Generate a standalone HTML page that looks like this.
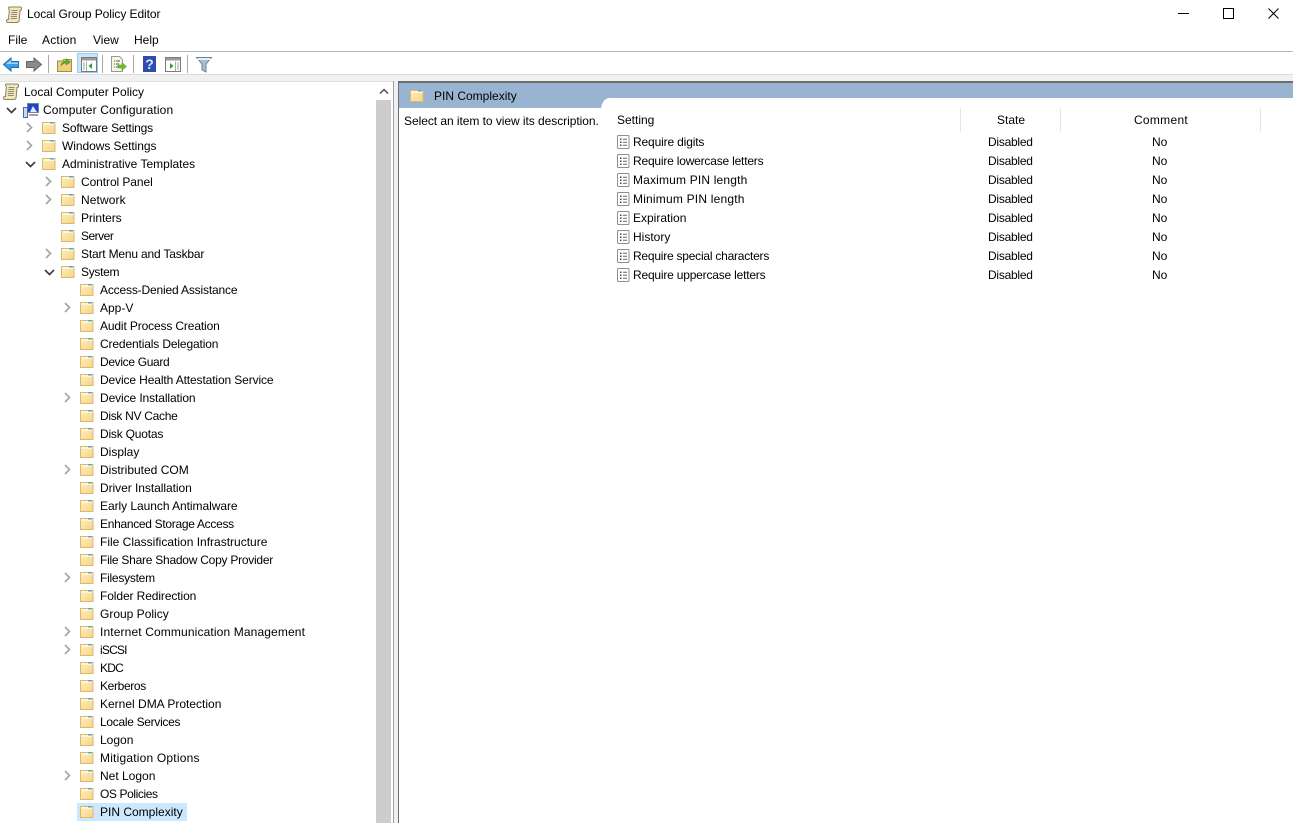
<!DOCTYPE html>
<html><head><meta charset="utf-8"><style>
html,body{margin:0;padding:0;background:#fff}
body{width:1293px;height:823px;position:relative;overflow:hidden;font-family:"Liberation Sans",sans-serif;font-size:12px;color:#000}
.a{position:absolute}
.t{position:absolute;white-space:nowrap;line-height:18px;height:18px}
svg.i{position:absolute;overflow:visible}
</style></head><body>
<svg width="0" height="0" style="position:absolute"><defs>
<linearGradient id="g" x1="0" y1="0" x2="1" y2="1"><stop offset="0" stop-color="#fdeebf"/><stop offset="1" stop-color="#f6d587"/></linearGradient>
<symbol id="f" viewBox="0 0 15 13"><path d="M1.500 12.500V1.500h12.500v11z" fill="url(#g)" stroke="#dcb86f"/><path d="M2 2h11.500v2H2z" fill="#fff6d8"/><rect x="9" y="1" width="4" height="1.500" fill="#5aa6dc"/></symbol>
<symbol id="d" viewBox="0 0 13 14"><rect x=".5" y=".5" width="11.500" height="13" rx="1" fill="#fff" stroke="#8f8f8f"/><path d="M3 3.500h1.500V5H3zM3 6.500h1.500V8H3zM3 9.500h1.500V11H3z" fill="#444"/><path d="M6 4.200h4M6 7.200h4M6 10.200h4" stroke="#666"/></symbol>
<symbol id="r" viewBox="0 0 7 11"><path d="M1 1l4.500 4.500L1 10" fill="none" stroke="#a6a6a6" stroke-width="1.700"/></symbol>
<symbol id="o" viewBox="0 0 11 7"><path d="M1 1l4.500 4.500L10 1" fill="none" stroke="#404040" stroke-width="1.700"/></symbol>
<symbol id="s" viewBox="0 0 16 17"><path d="M3.500 1h10.500c1.200 0 1.500 1 1.500 2 0 1-.5 1.500-1.500 1.500l-.8 9.500c-.1 1.500-1 2.500-2.200 2.500H2c-1 0-1.500-.7-1.500-1.500S1 13.500 2 13.500h.5L3.300 4C3.300 3 2.500 2.700 2.500 2S3 1 3.500 1z" fill="#f4e6bb" stroke="#8d8261"/><path d="M5.500 4.500h6M5.300 6.500h6M5.100 8.500h6M5 10.500h6M4.800 12.500h6" stroke="#8a8a80"/></symbol>
</defs></svg>

<!-- title bar -->
<svg class="i" style="left:6px;top:6px" width="16" height="17"><use href="#s"/></svg>
<div class="t" style="left:27px;top:5px;letter-spacing:-.08px">Local Group Policy Editor</div>
<div class="a" style="left:1178px;top:13px;width:11px;height:1px;background:#000"></div>
<div class="a" style="left:1223px;top:8px;width:9px;height:9px;border:1px solid #000"></div>
<svg class="i" style="left:1268px;top:8px" width="11" height="11"><path d="M.5.500l10 10M10.500.500l-10 10" stroke="#000" fill="none"/></svg>

<!-- menu -->
<div class="t" style="left:8px;top:31px">File</div>
<div class="t" style="left:42px;top:31px;letter-spacing:.2px">Action</div>
<div class="t" style="left:93px;top:31px">View</div>
<div class="t" style="left:134px;top:31px">Help</div>
<div class="a" style="left:0;top:51px;width:1293px;height:1px;background:#b4b7c0"></div>

<!-- toolbar -->
<svg class="i" style="left:3px;top:57px" width="16" height="15"><path d="M.5 7.500L8 1v3.500h7.500v6H8V14z" fill="#3a9ee8" stroke="#1c6fb5"/><path d="M3 7l5-4v2.500h7V7z" fill="#9bd4f7"/></svg>
<svg class="i" style="left:26px;top:57px" width="16" height="15"><path d="M15.500 7.500L8 1v3.500H.5v6H8V14z" fill="#8b8b8b" stroke="#666"/></svg>
<div class="a" style="left:48px;top:55px;width:1px;height:18px;background:#a8a8a8"></div>
<svg class="i" style="left:57px;top:56px" width="16" height="16"><path d="M.5 15.500V5h5l1-1.500h8v12z" fill="#f0cf7c" stroke="#a98b45"/><path d="M4 10c0-3 2-5 5-5V2.500L13.500 6 9 9V7C7 7 5.500 8 4 10z" fill="#55b029" stroke="#3d8a1c" stroke-width=".5"/></svg>
<div class="a" style="left:77px;top:53px;width:21px;height:20px;background:#cce4f7;border:1px solid #9ccbef;box-sizing:border-box"></div>
<svg class="i" style="left:81px;top:57px" width="16" height="15"><rect x=".5" y=".5" width="15" height="14" fill="#fff" stroke="#7a7a7a"/><rect x="1" y="1" width="14" height="2.500" fill="#9a9a9a"/><path d="M5.500 4.500v9.500" stroke="#aaa"/><path d="M2 6h2M2 8h2M2 10h2M2 12h2" stroke="#8aa9c8"/><path d="M11 6v6L7.500 9z" fill="#2ba32b"/></svg>
<div class="a" style="left:102px;top:55px;width:1px;height:18px;background:#a8a8a8"></div>
<svg class="i" style="left:111px;top:56px" width="16" height="16"><path d="M.5.500h8l3 3V15.500H.5z" fill="#fbf6e3" stroke="#999"/><path d="M3 5h1M5 5h4M3 8h1M5 8h3M3 11h1M5 11h3" stroke="#555"/><path d="M7 9h4V6.500L15.500 10.500 11 14.500V12H7z" fill="#69bf3b" stroke="#4c9a27" stroke-width=".5"/></svg>
<div class="a" style="left:133px;top:55px;width:1px;height:18px;background:#a8a8a8"></div>
<div class="a" style="left:143px;top:56px;width:13px;height:16px;background:#2f4db0;color:#dfe6fa;font:bold 14px/16px 'Liberation Sans',sans-serif;text-align:center">?</div>
<svg class="i" style="left:165px;top:57px" width="16" height="15"><rect x=".5" y=".5" width="15" height="14" fill="#fff" stroke="#7a7a7a"/><rect x="1" y="1" width="14" height="2.500" fill="#9a9a9a"/><path d="M10.500 4.500v9.500" stroke="#aaa"/><path d="M12 6h2M12 8h2M12 10h2M12 12h2" stroke="#8aa9c8"/><path d="M5 6v6L8.500 9z" fill="#2ba32b"/></svg>
<div class="a" style="left:187px;top:55px;width:1px;height:18px;background:#a8a8a8"></div>
<svg class="i" style="left:196px;top:57px" width="17" height="16"><path d="M.5.500h15L10 7v8l-4-2V7z" fill="#a9bccb" stroke="#6e8596"/><path d="M1.500 1h13v2h-13z" fill="#e3edf3"/></svg>

<!-- splitter band -->
<div class="a" style="left:0;top:74px;width:1293px;height:1px;background:#dcdcdc"></div>
<div class="a" style="left:0;top:75px;width:1293px;height:6px;background:#f0f0f0"></div>
<div class="a" style="left:0;top:81px;width:394px;height:1px;background:#e0e0e0"></div>
<div class="a" style="left:393px;top:81px;width:1px;height:742px;background:#a0a0a0"></div>
<div class="a" style="left:394px;top:81px;width:4px;height:742px;background:#f0f0f0"></div>
<div class="a" style="left:398px;top:81px;width:895px;height:2px;background:#6e6e6e"></div>
<div class="a" style="left:398px;top:81px;width:1px;height:742px;background:#6e6e6e"></div>

<!-- scrollbar -->
<div class="a" style="left:376px;top:100px;width:15px;height:723px;background:#cdcdcd"></div>
<svg class="i" style="left:379px;top:88px" width="10" height="7"><path d="M1 5.500l4-4 4 4" fill="none" stroke="#505050" stroke-width="1.500"/></svg>

<!-- tree -->
<svg class="i" style="left:3px;top:83px" width="16" height="17"><use href="#s"/></svg>
<div class="t" style="left:24px;top:83px">Local Computer Policy</div>
<svg class="i" style="left:6px;top:107px" width="11" height="7"><use href="#o"/></svg>
<svg class="i" style="left:23px;top:102px" width="16" height="16"><rect x="4.500" y="1.500" width="11" height="9" fill="#1d46c8" stroke="#7a7f88"/><path d="M7 10l3-6 4 6z" fill="#dfe9ff"/><rect x="6" y="12" width="9" height="2" fill="#a0a0a0"/><rect x=".5" y="5.500" width="4" height="10" fill="#cfd6e4" stroke="#4668a8"/></svg>
<div class="t" style="left:43px;top:101px;letter-spacing:.13px">Computer Configuration</div>

<svg class="i" style="left:26px;top:122px" width="7" height="11"><use href="#r"/></svg><svg class="i" style="left:41px;top:121px" width="15" height="13"><use href="#f"/></svg><div class="t" style="left:62px;top:119px;letter-spacing:-.18px">Software Settings</div>
<svg class="i" style="left:26px;top:140px" width="7" height="11"><use href="#r"/></svg><svg class="i" style="left:41px;top:139px" width="15" height="13"><use href="#f"/></svg><div class="t" style="left:62px;top:137px;letter-spacing:-.06px">Windows Settings</div>
<svg class="i" style="left:25px;top:161px" width="11" height="7"><use href="#o"/></svg><svg class="i" style="left:41px;top:157px" width="15" height="13"><use href="#f"/></svg><div class="t" style="left:62px;top:155px">Administrative Templates</div>

<svg class="i" style="left:45px;top:176px" width="7" height="11"><use href="#r"/></svg><svg class="i" style="left:60px;top:175px" width="15" height="13"><use href="#f"/></svg><div class="t" style="left:81px;top:173px;letter-spacing:-.08px">Control Panel</div>
<svg class="i" style="left:45px;top:194px" width="7" height="11"><use href="#r"/></svg><svg class="i" style="left:60px;top:193px" width="15" height="13"><use href="#f"/></svg><div class="t" style="left:81px;top:191px;letter-spacing:.1px">Network</div>
<svg class="i" style="left:60px;top:211px" width="15" height="13"><use href="#f"/></svg><div class="t" style="left:81px;top:209px;letter-spacing:-.1px">Printers</div>
<svg class="i" style="left:60px;top:229px" width="15" height="13"><use href="#f"/></svg><div class="t" style="left:81px;top:227px;letter-spacing:-.5px">Server</div>
<svg class="i" style="left:45px;top:248px" width="7" height="11"><use href="#r"/></svg><svg class="i" style="left:60px;top:247px" width="15" height="13"><use href="#f"/></svg><div class="t" style="left:81px;top:245px;letter-spacing:-.18px">Start Menu and Taskbar</div>
<svg class="i" style="left:44px;top:269px" width="11" height="7"><use href="#o"/></svg><svg class="i" style="left:60px;top:265px" width="15" height="13"><use href="#f"/></svg><div class="t" style="left:81px;top:263px;letter-spacing:-.3px">System</div>

<svg class="i" style="left:79px;top:283px" width="15" height="13"><use href="#f"/></svg><div class="t" style="left:100px;top:281px;letter-spacing:-.17px">Access-Denied Assistance</div>
<svg class="i" style="left:64px;top:302px" width="7" height="11"><use href="#r"/></svg><svg class="i" style="left:79px;top:301px" width="15" height="13"><use href="#f"/></svg><div class="t" style="left:100px;top:299px">App-V</div>
<svg class="i" style="left:79px;top:319px" width="15" height="13"><use href="#f"/></svg><div class="t" style="left:100px;top:317px;letter-spacing:-.14px">Audit Process Creation</div>
<svg class="i" style="left:79px;top:337px" width="15" height="13"><use href="#f"/></svg><div class="t" style="left:100px;top:335px;letter-spacing:-.14px">Credentials Delegation</div>
<svg class="i" style="left:79px;top:355px" width="15" height="13"><use href="#f"/></svg><div class="t" style="left:100px;top:353px;letter-spacing:-.33px">Device Guard</div>
<svg class="i" style="left:79px;top:373px" width="15" height="13"><use href="#f"/></svg><div class="t" style="left:100px;top:371px;letter-spacing:-.12px">Device Health Attestation Service</div>
<svg class="i" style="left:64px;top:392px" width="7" height="11"><use href="#r"/></svg><svg class="i" style="left:79px;top:391px" width="15" height="13"><use href="#f"/></svg><div class="t" style="left:100px;top:389px;letter-spacing:-.1px">Device Installation</div>
<svg class="i" style="left:79px;top:409px" width="15" height="13"><use href="#f"/></svg><div class="t" style="left:100px;top:407px;letter-spacing:-.3px">Disk NV Cache</div>
<svg class="i" style="left:79px;top:427px" width="15" height="13"><use href="#f"/></svg><div class="t" style="left:100px;top:425px;letter-spacing:-.2px">Disk Quotas</div>
<svg class="i" style="left:79px;top:445px" width="15" height="13"><use href="#f"/></svg><div class="t" style="left:100px;top:443px">Display</div>
<svg class="i" style="left:64px;top:464px" width="7" height="11"><use href="#r"/></svg><svg class="i" style="left:79px;top:463px" width="15" height="13"><use href="#f"/></svg><div class="t" style="left:100px;top:461px">Distributed COM</div>
<svg class="i" style="left:79px;top:481px" width="15" height="13"><use href="#f"/></svg><div class="t" style="left:100px;top:479px;letter-spacing:-.05px">Driver Installation</div>
<svg class="i" style="left:79px;top:499px" width="15" height="13"><use href="#f"/></svg><div class="t" style="left:100px;top:497px;letter-spacing:-.05px">Early Launch Antimalware</div>
<svg class="i" style="left:79px;top:517px" width="15" height="13"><use href="#f"/></svg><div class="t" style="left:100px;top:515px;letter-spacing:-.3px">Enhanced Storage Access</div>
<svg class="i" style="left:79px;top:535px" width="15" height="13"><use href="#f"/></svg><div class="t" style="left:100px;top:533px">File Classification Infrastructure</div>
<svg class="i" style="left:79px;top:553px" width="15" height="13"><use href="#f"/></svg><div class="t" style="left:100px;top:551px;letter-spacing:-.25px">File Share Shadow Copy Provider</div>
<svg class="i" style="left:64px;top:572px" width="7" height="11"><use href="#r"/></svg><svg class="i" style="left:79px;top:571px" width="15" height="13"><use href="#f"/></svg><div class="t" style="left:100px;top:569px;letter-spacing:-.25px">Filesystem</div>
<svg class="i" style="left:79px;top:589px" width="15" height="13"><use href="#f"/></svg><div class="t" style="left:100px;top:587px;letter-spacing:-.1px">Folder Redirection</div>
<svg class="i" style="left:79px;top:607px" width="15" height="13"><use href="#f"/></svg><div class="t" style="left:100px;top:605px">Group Policy</div>
<svg class="i" style="left:64px;top:626px" width="7" height="11"><use href="#r"/></svg><svg class="i" style="left:79px;top:625px" width="15" height="13"><use href="#f"/></svg><div class="t" style="left:100px;top:623px;letter-spacing:.13px">Internet Communication Management</div>
<svg class="i" style="left:64px;top:644px" width="7" height="11"><use href="#r"/></svg><svg class="i" style="left:79px;top:643px" width="15" height="13"><use href="#f"/></svg><div class="t" style="left:100px;top:641px;letter-spacing:-.8px">iSCSI</div>
<svg class="i" style="left:79px;top:661px" width="15" height="13"><use href="#f"/></svg><div class="t" style="left:100px;top:659px;letter-spacing:-.8px">KDC</div>
<svg class="i" style="left:79px;top:679px" width="15" height="13"><use href="#f"/></svg><div class="t" style="left:100px;top:677px;letter-spacing:-.35px">Kerberos</div>
<svg class="i" style="left:79px;top:697px" width="15" height="13"><use href="#f"/></svg><div class="t" style="left:100px;top:695px">Kernel DMA Protection</div>
<svg class="i" style="left:79px;top:715px" width="15" height="13"><use href="#f"/></svg><div class="t" style="left:100px;top:713px;letter-spacing:-.3px">Locale Services</div>
<svg class="i" style="left:79px;top:733px" width="15" height="13"><use href="#f"/></svg><div class="t" style="left:100px;top:731px">Logon</div>
<svg class="i" style="left:79px;top:751px" width="15" height="13"><use href="#f"/></svg><div class="t" style="left:100px;top:749px;letter-spacing:.2px">Mitigation Options</div>
<svg class="i" style="left:64px;top:770px" width="7" height="11"><use href="#r"/></svg><svg class="i" style="left:79px;top:769px" width="15" height="13"><use href="#f"/></svg><div class="t" style="left:100px;top:767px">Net Logon</div>
<svg class="i" style="left:79px;top:787px" width="15" height="13"><use href="#f"/></svg><div class="t" style="left:100px;top:785px;letter-spacing:-.4px">OS Policies</div>
<div class="a" style="left:77px;top:803px;width:110px;height:18px;background:#cce8ff"></div>
<svg class="i" style="left:79px;top:805px" width="15" height="13"><use href="#f"/></svg><div class="t" style="left:100px;top:803px">PIN Complexity</div>

<!-- right pane header -->
<div class="a" style="left:399px;top:83px;width:894px;height:15px;background:#99b4d1"></div>
<div class="a" style="left:399px;top:98px;width:202px;height:10px;background:#99b4d1"></div>
<svg class="i" style="left:601px;top:98px" width="9" height="10"><path d="M0 0h9C4 0 1 4 0 10z" fill="#99b4d1"/></svg>
<svg class="i" style="left:409px;top:89px" width="15" height="13"><use href="#f"/></svg>
<div class="t" style="left:434px;top:87px">PIN Complexity</div>
<div class="t" style="left:404px;top:112px;letter-spacing:-.05px">Select an item to view its description.</div>

<!-- list header -->
<div class="t" style="left:617px;top:111px">Setting</div>
<div class="t" style="left:961px;top:111px;width:100px;text-align:center">State</div>
<div class="t" style="left:1061px;top:111px;width:200px;text-align:center;letter-spacing:.3px">Comment</div>
<div class="a" style="left:960px;top:108px;width:1px;height:24px;background:#e5e5e5"></div>
<div class="a" style="left:1060px;top:108px;width:1px;height:24px;background:#e5e5e5"></div>
<div class="a" style="left:1260px;top:108px;width:1px;height:24px;background:#e5e5e5"></div>

<!-- rows -->
<svg class="i" style="left:617px;top:135px" width="13" height="14"><use href="#d"/></svg><div class="t" style="left:633px;top:133px;letter-spacing:-.15px">Require digits</div><div class="t" style="left:988px;top:133px;letter-spacing:-.25px">Disabled</div><div class="t" style="left:1152px;top:133px">No</div>
<svg class="i" style="left:617px;top:154px" width="13" height="14"><use href="#d"/></svg><div class="t" style="left:633px;top:152px;letter-spacing:-.2px">Require lowercase letters</div><div class="t" style="left:988px;top:152px;letter-spacing:-.25px">Disabled</div><div class="t" style="left:1152px;top:152px">No</div>
<svg class="i" style="left:617px;top:173px" width="13" height="14"><use href="#d"/></svg><div class="t" style="left:633px;top:171px;letter-spacing:.17px">Maximum PIN length</div><div class="t" style="left:988px;top:171px;letter-spacing:-.25px">Disabled</div><div class="t" style="left:1152px;top:171px">No</div>
<svg class="i" style="left:617px;top:192px" width="13" height="14"><use href="#d"/></svg><div class="t" style="left:633px;top:190px;letter-spacing:.2px">Minimum PIN length</div><div class="t" style="left:988px;top:190px;letter-spacing:-.25px">Disabled</div><div class="t" style="left:1152px;top:190px">No</div>
<svg class="i" style="left:617px;top:211px" width="13" height="14"><use href="#d"/></svg><div class="t" style="left:633px;top:209px">Expiration</div><div class="t" style="left:988px;top:209px;letter-spacing:-.25px">Disabled</div><div class="t" style="left:1152px;top:209px">No</div>
<svg class="i" style="left:617px;top:230px" width="13" height="14"><use href="#d"/></svg><div class="t" style="left:633px;top:228px">History</div><div class="t" style="left:988px;top:228px;letter-spacing:-.25px">Disabled</div><div class="t" style="left:1152px;top:228px">No</div>
<svg class="i" style="left:617px;top:249px" width="13" height="14"><use href="#d"/></svg><div class="t" style="left:633px;top:247px;letter-spacing:-.23px">Require special characters</div><div class="t" style="left:988px;top:247px;letter-spacing:-.25px">Disabled</div><div class="t" style="left:1152px;top:247px">No</div>
<svg class="i" style="left:617px;top:268px" width="13" height="14"><use href="#d"/></svg><div class="t" style="left:633px;top:266px;letter-spacing:-.2px">Require uppercase letters</div><div class="t" style="left:988px;top:266px;letter-spacing:-.25px">Disabled</div><div class="t" style="left:1152px;top:266px">No</div>
</body></html>
